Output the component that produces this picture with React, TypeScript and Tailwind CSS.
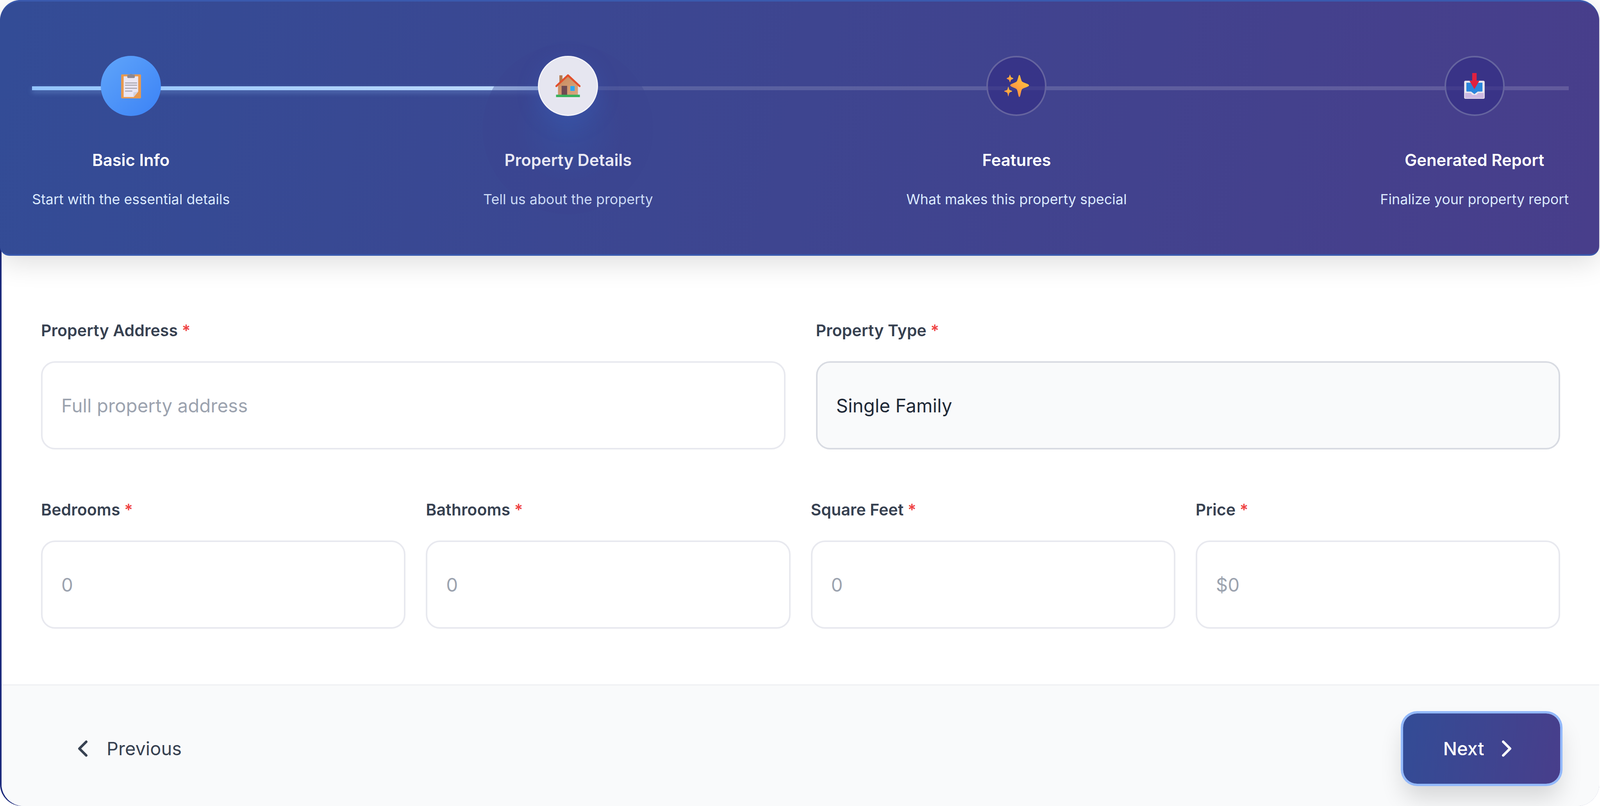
import { ChevronLeft, ChevronRight } from 'lucide-react'

function ClipboardIcon() {
  return (
    <svg width="51" height="63" viewBox="0 0 71 88">
      <rect x="0" y="2" width="71" height="86" rx="3" fill="#e8994e" />
      <path d="M9 9H61V64L45 83H9Z" fill="#ebe6f3" />
      <path d="M44 84V66C50 66 56 65 61 62Z" fill="#d3d0dc" />
      <path d="M22 12V6C22 4 24 3 27 3H30C31 0 39 0 41 3H45C48 3 49 4 49 6V12C49 14 48 15 46 15H25C23 15 22 14 22 12Z" fill="#8c8790" />
      <rect x="14" y="31" width="43" height="3.5" fill="#a6a3ad" />
      <rect x="14" y="39" width="43" height="3.5" fill="#a6a3ad" />
      <rect x="14" y="50" width="43" height="3.5" fill="#a6a3ad" />
      <rect x="14" y="60" width="26" height="3.5" fill="#a6a3ad" />
    </svg>
  )
}

function HouseIcon() {
  return (
    <svg width="64" height="61" viewBox="0 0 90 86">
      <defs>
        <linearGradient id="wall" x1="0" y1="0" x2="1" y2="1">
          <stop offset="0" stopColor="#c98a5e" />
          <stop offset="1" stopColor="#d9a67f" />
        </linearGradient>
      </defs>
      <rect x="14" y="4" width="11" height="34" fill="#b57a4e" />
      <path d="M9 40L45 6L81 40V78H9Z" fill="url(#wall)" />
      <path d="M3 43L45 4L87 43" fill="none" stroke="#e2502c" strokeWidth="7" strokeLinecap="round" strokeLinejoin="round" />
      <rect x="22" y="42" width="20" height="36" fill="#6f4a52" />
      <rect x="52" y="41" width="19" height="21" fill="#e9a868" />
      <rect x="53.5" y="42.5" width="16" height="18" fill="#2ea7f2" />
      <rect x="2" y="74" width="86" height="9" fill="#37b25c" />
      <rect x="2" y="83" width="86" height="3" fill="#f6e6f6" />
    </svg>
  )
}

function SparklesIcon() {
  return (
    <svg width="65" height="60" viewBox="0 0 92 84">
      <defs>
        <linearGradient id="spark" x1="1" y1="0" x2="0" y2="1">
          <stop offset="0" stopColor="#ffd23c" />
          <stop offset="1" stopColor="#ff7f45" />
        </linearGradient>
      </defs>
      <path d="M56 2C59 2 61 18 65 25C69 31 91 34 91 40C91 46 69 49 65 55C61 63 60 82 56 82C52 82 51 63 47 55C43 49 23 46 23 40C23 34 43 31 47 25C51 18 53 2 56 2Z" fill="url(#spark)" />
      <path d="M22 1C23 1 24 8 26 10C28 12 34 13 34 15C34 17 28 18 26 20C24 22 23 29 22 29C21 29 20 22 18 20C16 18 10 17 10 15C10 13 16 12 18 10C20 8 21 1 22 1Z" fill="url(#spark)" />
      <path d="M16 45C17 45 18 53 20 56C22 58 30 59 30 61C30 63 22 64 20 67C18 70 17 80 16 80C15 80 14 70 12 67C10 64 1 63 1 61C1 59 10 58 12 56C14 53 15 45 16 45Z" fill="url(#spark)" />
    </svg>
  )
}

function InboxIcon() {
  return (
    <svg width="53" height="66" viewBox="0 0 74 93">
      <rect x="0" y="28" width="74" height="65" rx="5" fill="#ece7ee" />
      <path d="M8 35H66V64C66 66 65 67 63 67H49L37 76L25 67H11C9 67 8 66 8 64Z" fill="#2b86dc" />
      <path d="M3 72H23L30 79H44L51 72H71V88C71 90 70 91 68 91H6C4 91 3 90 3 88Z" fill="#cdb9e2" />
      <path d="M29 0H45V28H55L37 58L19 28H29Z" fill="#e0213f" />
    </svg>
  )
}

const steps = [
  { title: 'Basic Info', sub: 'Start with the essential details', status: 'done', icon: <ClipboardIcon /> },
  { title: 'Property Details', sub: 'Tell us about the property', status: 'active', icon: <HouseIcon /> },
  { title: 'Features', sub: 'What makes this property special', status: 'todo', icon: <SparklesIcon /> },
  { title: 'Generated Report', sub: 'Finalize your property report', status: 'todo', icon: <InboxIcon /> },
]

function Field({ label, placeholder, value, muted }: { label: string; placeholder?: string; value?: string; muted?: boolean }) {
  return (
    <div className="flex flex-col">
      <label className="mb-[49px] text-[41.2px] leading-[60px] font-semibold text-[#374151]">
        {label} <span className="text-[#ef4444]">*</span>
      </label>
      <input
        readOnly
        placeholder={placeholder}
        value={value}
        className={
          muted
            ? 'h-[226px] w-full rounded-[36px] border-[4px] border-[#d8dbe2] bg-[#f9fafb] px-[48px] text-[47.5px] text-[#1f2937] outline-none'
            : 'h-[226px] w-full rounded-[36px] border-[4px] border-[#e8e9ef] bg-white px-[48px] text-[47.5px] text-[#1f2937] outline-none placeholder:text-[#9ca3af]'
        }
      />
    </div>
  )
}

export default function App() {
  return (
    <div className="h-[2064px] w-full bg-white pr-[2px] font-[Inter,sans-serif]">
      <div className="flex h-full w-full flex-col rounded-[56px] bg-[#1c2a7c]">
        {/* Stepper header */}
        <div className="relative z-10 h-[655px] rounded-t-[52px] rounded-b-[24px] border-y-[4px] border-[#3a5aae] bg-[linear-gradient(100deg,#334c96,#3e4590_50%,#483e8b)] pt-[139px] pr-[78px] pl-[82px] shadow-[0_15px_73px_rgba(0,0,0,0.14)]">
          {/* Progress track */}
          <div className="absolute top-[217px] right-[78px] left-[82px] h-[10px] bg-white/15">
            <div className="h-full w-1/3 bg-[linear-gradient(90deg,#93c5fd,#bfdbfe)] shadow-[0_6px_14px_rgba(147,197,253,0.35)]" />
          </div>

          <div className="flex items-start justify-between">
            {steps.map((step) => (
              <div key={step.title} className="relative flex flex-col items-center">
                {step.status === 'active' && (
                  <div className="absolute top-[-31px] left-1/2 h-[437px] w-[437px] -translate-x-1/2 rounded-full bg-[radial-gradient(circle,rgba(54,80,160,0.6),rgba(58,66,143,0.4)_45%,rgba(58,68,143,0.35))]" />
                )}
                <div
                  className={
                    step.status === 'done'
                      ? 'relative z-10 flex h-[154px] w-[154px] items-center justify-center rounded-full bg-[linear-gradient(135deg,#60a5fa,#3b82f6)]'
                      : step.status === 'active'
                        ? 'relative z-10 flex h-[154px] w-[154px] items-center justify-center rounded-full border-[3px] border-[#f4f4f9] bg-[#e6e6f0] shadow-[0_16px_60px_rgba(59,130,246,0.18)]'
                        : 'relative z-10 flex h-[154px] w-[154px] items-center justify-center rounded-full border-[4px] border-[#65649f] bg-[#322d84]/65'
                  }
                >
                  {step.icon}
                </div>
                <div
                  className={
                    step.status === 'active'
                      ? 'relative mt-[83px] text-[41.8px] leading-[60px] font-semibold text-[#e8e8f3]'
                      : 'relative mt-[83px] text-[41.8px] leading-[60px] font-semibold text-white'
                  }
                >
                  {step.title}
                </div>
                <div
                  className={
                    step.status === 'active'
                      ? 'relative mt-[45px] text-[35.8px] leading-[50px] whitespace-nowrap text-[#cbdaf5]'
                      : 'relative mt-[45px] text-[35.8px] leading-[50px] whitespace-nowrap text-[#dbeafe]'
                  }
                >
                  {step.sub}
                </div>
              </div>
            ))}
          </div>
        </div>

        {/* Form */}
        <div className="-mt-[30px] ml-[4px] flex flex-1 flex-col overflow-hidden rounded-b-[56px] bg-white">
          <div className="flex-1 pt-[191px] pr-[100px] pl-[101px]">
            <div className="grid grid-cols-2 gap-x-[78px]">
              <Field label="Property Address" placeholder="Full property address" />
              <Field label="Property Type" value="Single Family" muted />
            </div>
            <div className="mt-[124px] grid grid-cols-4 gap-x-[52px]">
              <Field label="Bedrooms" placeholder="0" />
              <Field label="Bathrooms" placeholder="0" />
              <Field label="Square Feet" placeholder="0" />
              <Field label="Price" placeholder="$0" />
            </div>
          </div>

          {/* Footer */}
          <div className="flex h-[312px] items-start justify-between border-t-[4px] border-[#f1f2f5] bg-[#f9fafb] pt-[71px] pr-[100px] pl-[101px]">
            <button className="flex h-[180px] items-center gap-[26px] pl-[72px] text-[47px] text-[#374151]">
              <ChevronLeft size={70} strokeWidth={2.2} />
              Previous
            </button>
            <button className="flex h-[180px] w-[402px] items-center justify-center gap-[22px] rounded-[36px] bg-[linear-gradient(100deg,#334c96,#483e8b)] text-[47px] font-medium text-white shadow-[0_0_0_6px_#93b9fb,0_37px_60px_rgba(0,0,0,0.14)]">
              Next
              <ChevronRight size={70} strokeWidth={2.2} />
            </button>
          </div>
        </div>
      </div>
    </div>
  )
}
